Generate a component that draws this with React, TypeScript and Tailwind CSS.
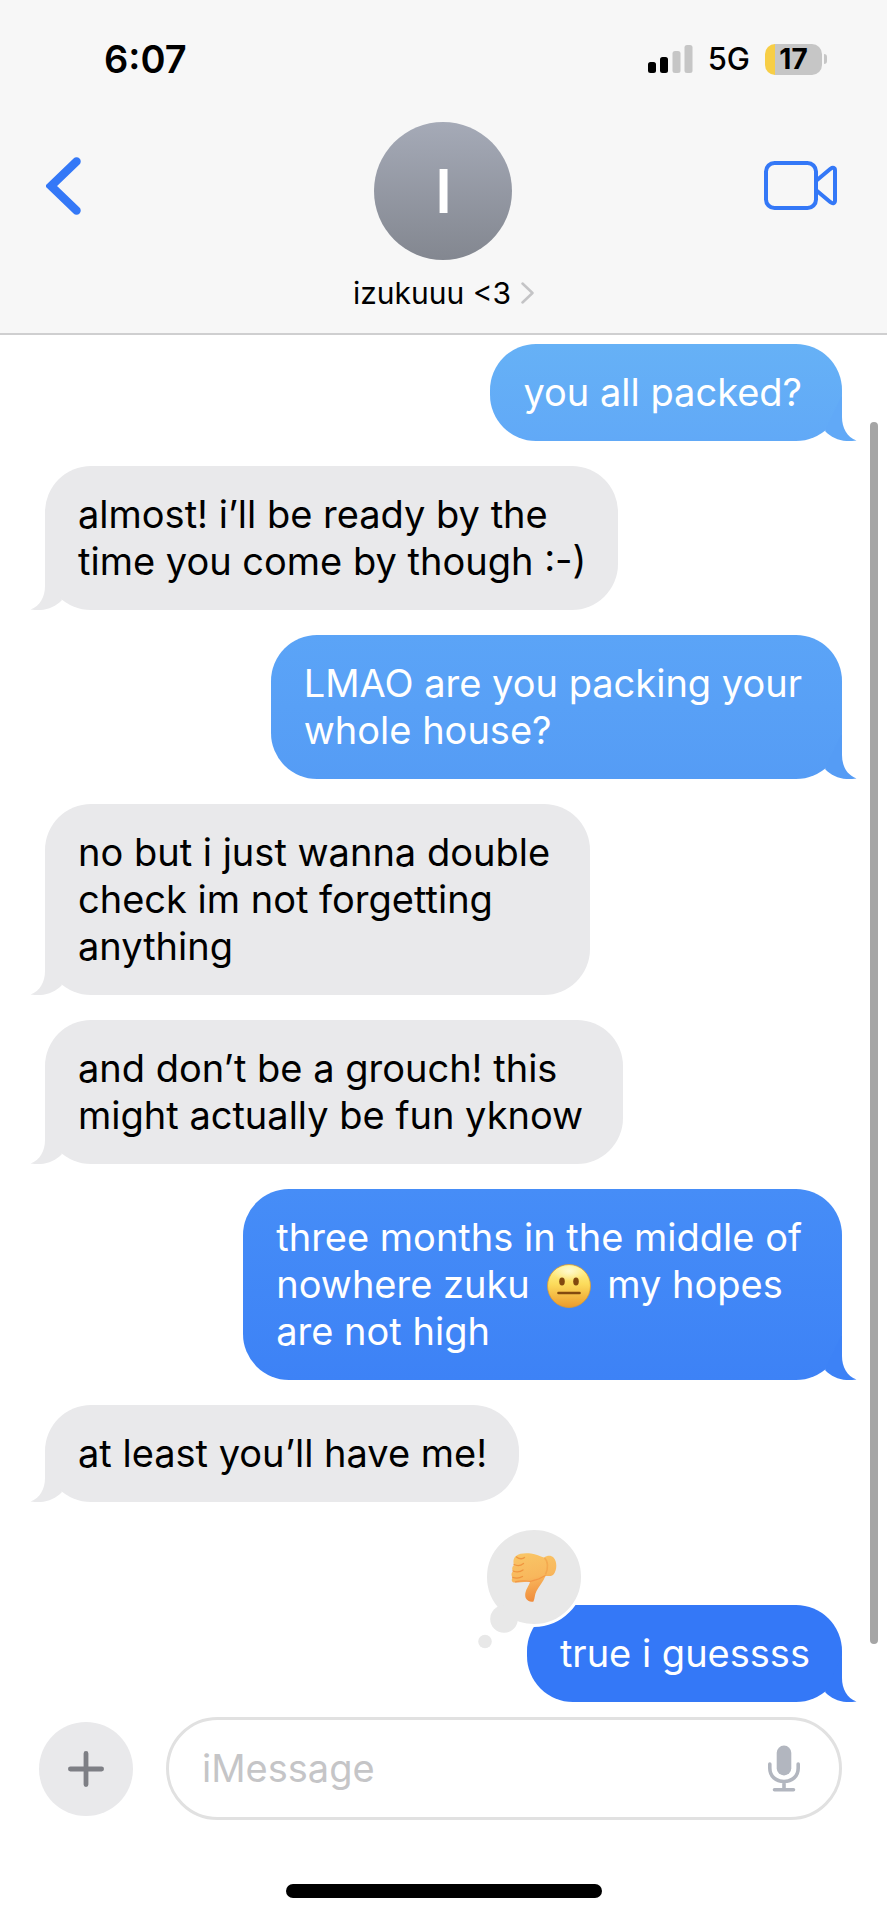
import { Fragment, useState } from "react"
import type { ReactNode } from "react"

type Tone = "gray" | "sky" | "azure" | "royal" | "blue"

interface Message {
  id: number
  tone: Tone
  lines: ReactNode[]
  roomy?: boolean
  disliked?: boolean
}

const toneClasses: Record<Tone, { bubble: string; tail: string }> = {
  gray: { bubble: "bg-[#e9e9eb] text-black", tail: "text-[#e9e9eb]" },
  sky: { bubble: "bg-linear-to-b from-[#66b1f6] to-[#61a9f7] text-white", tail: "text-[#61a9f7]" },
  azure: { bubble: "bg-linear-to-b from-[#5ba4f7] to-[#559cf5] text-white", tail: "text-[#559cf5]" },
  royal: { bubble: "bg-linear-to-b from-[#468df7] to-[#3d82f6] text-white", tail: "text-[#3d82f6]" },
  blue: { bubble: "bg-[#3478f7] text-white", tail: "text-[#3478f7]" },
}

function NeutralFace() {
  return (
    <svg className="mx-[6px] -mt-3 -mb-2 inline-block h-11 w-11 align-middle" viewBox="0 0 44 44" role="img" aria-label="neutral face">
      <defs>
        <linearGradient id="face" x1="0" y1="0" x2="0" y2="1">
          <stop offset="0" stopColor="#fff59b" />
          <stop offset="0.45" stopColor="#fcdc5c" />
          <stop offset="1" stopColor="#ec9a2c" />
        </linearGradient>
        <radialGradient id="shine" cx="0.5" cy="0.25" r="0.5">
          <stop offset="0" stopColor="#fffde0" stopOpacity="0.8" />
          <stop offset="1" stopColor="#fffde0" stopOpacity="0" />
        </radialGradient>
      </defs>
      <circle cx="22" cy="22" r="21.5" fill="url(#face)" stroke="#dd9a2e" strokeWidth="0.8" />
      <ellipse cx="22" cy="12" rx="17" ry="10" fill="url(#shine)" />
      <ellipse cx="15" cy="17.5" rx="2.8" ry="4" fill="#82490f" />
      <ellipse cx="29" cy="17.5" rx="2.8" ry="4" fill="#82490f" />
      <path d="M11.5 29H32.5" stroke="#82490f" strokeWidth="2.6" strokeLinecap="round" />
    </svg>
  )
}

function ThumbsDown() {
  return (
    <svg className="h-[49px] w-[46px]" viewBox="0 0 46 49" role="img" aria-label="thumbs down">
      <defs>
        <linearGradient id="hand" x1="0.3" y1="0" x2="0.5" y2="1">
          <stop offset="0" stopColor="#f9c566" />
          <stop offset="0.5" stopColor="#f8b75c" />
          <stop offset="1" stopColor="#f08a3a" />
        </linearGradient>
      </defs>
      <path
        d="M5 3C8 0 15 0 20 .5C25 1 29 3.5 33 4.500C36 2.500 40 2 42.500 4.500C46.500 9 46 17 42.500 21.500C40 24 37 22.500 34.500 23C32 29 28 33 25.500 38C23.500 42 24 45 22.500 48.500C20 49.500 16 48 14.700 45C12.500 39 18 33 19 29C14 28 8 30 3 29.500C0 29 .5 26 1.500 24.500C-.2 22 .5 19.500 2 18.500C.4 16 1.500 13 3 12C1.800 9 2.500 4.500 5 3Z"
        fill="url(#hand)"
      />
      <path
        d="M3 11.500C6 13 10 12.500 12.500 10.500M2 18C6 19.500 9.500 19 12 17M1.700 24.300C5 25.500 9 25 11.500 23.500M5.500 4C8.500 6.500 12 6 13.500 4.500"
        fill="none"
        stroke="#ee8b36"
        strokeWidth="1.3"
        strokeLinecap="round"
        opacity="0.8"
      />
      <path d="M4 29C12 27 16 28 19.500 28.500C23 27 27 27 30.500 24.500L34.500 22.500" fill="none" stroke="#f0873a" strokeWidth="1.3" opacity="0.6" />
      <path d="M33.500 5C37 8 37.500 15 34.500 21.500" fill="none" stroke="#f09c45" strokeWidth="1.6" opacity="0.6" />
    </svg>
  )
}

function Reaction() {
  return (
    <div className="absolute -top-[78px] -left-[49px]">
      <div className="ml-[6px] flex size-[100px] items-center justify-center rounded-full border-[3px] border-white bg-[#e8e8e8]">
        <ThumbsDown />
      </div>
      <svg className="absolute top-[76px] left-0 h-[46px] w-[40px]" viewBox="0 0 40 46" aria-hidden="true">
        <circle cx="26" cy="16" r="13.800" fill="#e8e8e8" />
        <circle cx="7" cy="38.500" r="6.800" fill="#e8e8e8" />
      </svg>
    </div>
  )
}

function Bubble({ message }: { message: Message }) {
  const mine = message.tone !== "gray"
  const tone = toneClasses[message.tone]

  return (
    <li className={mine ? "flex justify-end" : "flex justify-start"}>
      <div
        className={`relative rounded-[46px] py-[25px] pl-[33px] text-[38px] leading-[47px] ${message.roomy ? "pr-10" : "pr-8"} ${tone.bubble}`}
      >
        <p>
          {message.lines.map((line, i) => (
            <Fragment key={i}>
              {i > 0 && <br />}
              {line}
            </Fragment>
          ))}
        </p>
        <svg
          className={`absolute bottom-0 h-[46px] w-8 ${tone.tail} ${mine ? "-right-[15px]" : "-left-[15px] -scale-x-100"}`}
          viewBox="0 0 32 46"
          fill="currentColor"
          aria-hidden="true"
        >
          <path d="M17 0V22C17 33 22 42 31.500 45.500C19 47.500 8 44.500 0 36Z" />
        </svg>
        {message.disliked && <Reaction />}
      </div>
    </li>
  )
}

const messages: Message[] = [
  { id: 1, tone: "sky", roomy: true, lines: ["you all packed?"] },
  { id: 2, tone: "gray", lines: ["almost! i’ll be ready by the", "time you come by though :-)"] },
  { id: 3, tone: "azure", roomy: true, lines: ["LMAO are you packing your", "whole house?"] },
  { id: 4, tone: "gray", roomy: true, lines: ["no but i just wanna double", "check im not forgetting", "anything"] },
  { id: 5, tone: "gray", roomy: true, lines: ["and don’t be a grouch! this", "might actually be fun yknow"] },
  {
    id: 6,
    tone: "royal",
    roomy: true,
    lines: [
      "three months in the middle of",
      <>
        nowhere zuku <NeutralFace /> my hopes
      </>,
      "are not high",
    ],
  },
  { id: 7, tone: "gray", lines: ["at least you’ll have me!"] },
  { id: 8, tone: "blue", lines: ["true i guessss"], disliked: true },
]

function StatusBar() {
  return (
    <div className="flex h-[118px] items-center justify-between pr-[60px] pl-[104px]">
      <span className="text-[38px] font-semibold">6:07</span>
      <div className="flex items-center gap-[15px]">
        <svg className="h-7 w-[45px]" viewBox="0 0 45 28" role="img" aria-label="signal">
          <rect x="0" y="17" width="8" height="11" rx="2.500" />
          <rect x="12" y="12" width="8" height="16" rx="2.500" />
          <rect x="24.500" y="6" width="8" height="22" rx="2.500" fill="#c6c6c6" />
          <rect x="36.500" y="0" width="8" height="28" rx="2.500" fill="#c6c6c6" />
        </svg>
        <span className="text-[31px] font-medium">5G</span>
        <div className="flex items-center gap-[2px]">
          <div className="flex h-[31px] w-[57px] items-center justify-center rounded-[10px] bg-linear-to-r from-[#f7ce46] from-17% to-[#c6c6c6] to-17% text-[28px] leading-none font-bold">
            17
          </div>
          <span className="h-[10px] w-[3px] rounded-r-full bg-[#c6c6c6]" />
        </div>
      </div>
    </div>
  )
}

function Header() {
  return (
    <header className="border-b-2 border-[#cfcfd0] bg-[#f7f7f7]">
      <StatusBar />
      <nav className="grid grid-cols-[1fr_auto_1fr] items-start px-[46px] pt-1 pb-5">
        <button aria-label="Back" className="flex h-[128px] w-9 items-center justify-self-start text-[#3478f7]">
          <svg className="h-[58px] w-9" viewBox="0 0 36 58" fill="none" stroke="currentColor" strokeWidth="8.500">
            <path d="M30.500 4.500L5 29L30.500 53.500" strokeLinecap="round" strokeLinejoin="miter" />
          </svg>
        </button>
        <button className="flex flex-col items-center gap-[13px]">
          <span className="flex size-[138px] items-center justify-center rounded-full bg-linear-to-b from-[#a5aab7] to-[#838790] text-[60px] font-semibold text-white">
            I
          </span>
          <span className="flex items-center gap-[10px] text-[30px] leading-10">
            izukuuu &lt;3
            <svg className="h-[22px] w-[13px]" viewBox="0 0 13 22" fill="none" stroke="#c4c4c6" strokeWidth="2.500">
              <path d="M1.500 1.500L11.500 11L1.500 20.500" strokeLinecap="round" strokeLinejoin="round" />
            </svg>
          </span>
        </button>
        <button aria-label="Video call" className="mr-1 flex h-[128px] items-center justify-self-end text-[#3478f7]">
          <svg className="h-[50px] w-[73px]" viewBox="0 0 73 50" fill="none" stroke="currentColor" strokeWidth="4">
            <rect x="2" y="2" width="50" height="45" rx="8.500" />
            <path d="M52.500 19.500L66.500 7.800C69 6 71 6.800 71 9.500V39.500C71 42.200 69 43 66.500 41.200L52.500 29.500" strokeLinejoin="round" />
          </svg>
        </button>
      </nav>
    </header>
  )
}

function Composer() {
  const [draft, setDraft] = useState("")

  return (
    <form className="flex items-center gap-[33px] pt-[15px] pr-[45px] pl-[39px]" onSubmit={(e) => e.preventDefault()}>
      <button type="button" aria-label="Add attachment" className="flex size-[94px] shrink-0 items-center justify-center rounded-full bg-[#e9e9eb]">
        <svg className="size-9" viewBox="0 0 36 36" stroke="#7e7f85" strokeWidth="4.800" strokeLinecap="round">
          <path d="M18 2.400V33.600M2.400 18H33.600" />
        </svg>
      </button>
      <div className="flex h-[103px] min-w-0 flex-1 items-center rounded-full border-[3px] border-[#e1e1e1] pr-[39px] pl-[33px]">
        <input
          aria-label="iMessage"
          placeholder="iMessage"
          value={draft}
          onChange={(e) => setDraft(e.target.value)}
          className="min-w-0 flex-1 text-[38px] leading-[47px] outline-none placeholder:text-[#c5c5c7]"
        />
        <button type="button" aria-label="Dictate" className="shrink-0">
          <svg className="h-[47px] w-8" viewBox="0 0 32 47" fill="none" stroke="#b2b6bf" strokeWidth="3.600" strokeLinecap="round">
            <rect x="8.700" y="0.500" width="14.600" height="30" rx="7.300" fill="#b2b6bf" stroke="none" />
            <path d="M1.800 19V23C1.800 31.500 8 36.500 16 36.500C24 36.500 30.200 31.500 30.200 23V19M16 36.500V44M6.500 44.700H25.500" />
          </svg>
        </button>
      </div>
    </form>
  )
}

export default function App() {
  return (
    <div className="flex min-h-screen flex-col bg-white font-[Inter,Roboto,sans-serif] text-black">
      <Header />
      <main className="relative px-[45px] pt-[9px]">
        <ul className="flex flex-col gap-[25px] [&>li:last-child]:mt-[78px]">
          {messages.map((message) => (
            <Bubble key={message.id} message={message} />
          ))}
        </ul>
        <div className="absolute top-[87px] right-[9px] bottom-[58px] w-2 rounded-full bg-[#a5a5a5]" />
      </main>
      <Composer />
      <div className="mx-auto mt-16 mb-[21px] h-[14px] w-[316px] rounded-full bg-black" />
    </div>
  )
}
